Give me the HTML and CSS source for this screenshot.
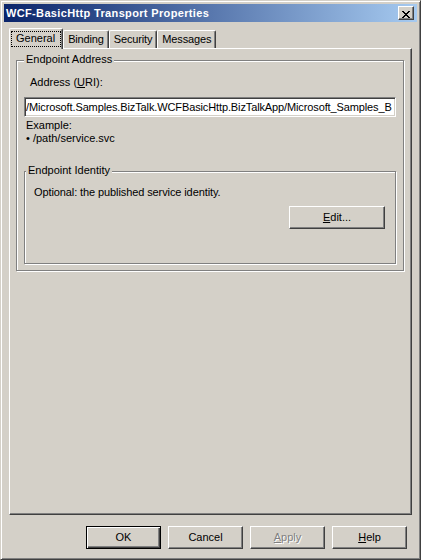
FILE: index.html
```html
<!DOCTYPE html>
<html>
<head>
<meta charset="utf-8">
<title>WCF-BasicHttp Transport Properties</title>
<link rel="stylesheet" href="styles.css">
</head>
<body>
<div class="window">
  <div class="titlebar">
    <span class="title">WCF-BasicHttp Transport Properties</span>
    <button class="close" aria-label="Close">
      <svg width="8" height="7" viewBox="0 0 8 7" shape-rendering="crispEdges"><path fill="#000" d="M0 0h2v1H0zM6 0h2v1H6zM1 1h2v1H1zM5 1h2v1H5zM2 2h4v1H2zM3 3h2v1H3zM2 4h4v1H2zM1 5h2v1H1zM5 5h2v1H5zM0 6h2v1H0zM6 6h2v1H6z"/></svg>
    </button>
  </div>
  <div class="content">
    <div class="tabs">
      <div class="tab active"><span class="focus">General</span></div>
      <div class="tab">Binding</div>
      <div class="tab">Security</div>
      <div class="tab">Messages</div>
    </div>
    <div class="panel">
      <div class="group outer">
        <span class="group-title">Endpoint Address</span>
        <span class="field-label">Address (<u>U</u>RI):</span>
        <div class="textbox">/Microsoft.Samples.BizTalk.WCFBasicHttp.BizTalkApp/Microsoft_Samples_B</div>
        <div class="example">Example:<br>• /path/service.svc</div>
        <div class="group inner">
          <span class="group-title">Endpoint Identity</span>
          <div class="note">Optional: the published service identity.</div>
          <button class="btn btn-edit"><u>E</u>dit...</button>
        </div>
      </div>
    </div>
    <div class="footer">
      <button class="btn default">OK</button>
      <button class="btn">Cancel</button>
      <button class="btn disabled"><u>A</u>pply</button>
      <button class="btn"><u>H</u>elp</button>
    </div>
  </div>
</div>
</body>
</html>
```
FILE: styles.css
```css
* { box-sizing: border-box; }
html, body { margin: 0; padding: 0; background: #d4d0c8; }
body {
  font-family: "Liberation Sans", Arial, sans-serif;
  font-size: 11px;
  line-height: 13px;
  color: #000;
}
.window {
  width: 421px;
  height: 560px;
  display: flex;
  flex-direction: column;
  padding: 3px;
  border: 1px solid;
  border-color: #d4d0c8 #404040 #404040 #d4d0c8;
  box-shadow: inset 1px 1px #fff, inset -1px -1px #808080;
  background: #d4d0c8;
}
.titlebar {
  height: 18px;
  flex: none;
  display: flex;
  align-items: center;
  justify-content: space-between;
  padding: 0 3px 0 2px;
  background: linear-gradient(to right, #0a246a, #a6caf0);
  color: #fff;
  font-weight: bold;
  line-height: 18px;
}
.title { letter-spacing: 0.35px; }
.close {
  width: 16px;
  height: 14px;
  padding: 2px 0 0 3px;
  border: 1px solid;
  border-color: #fff #404040 #404040 #fff;
  box-shadow: inset -1px -1px #808080;
  background: #d4d0c8;
  display: block;
}
.close svg { display: block; }
.content {
  flex: 1;
  display: flex;
  flex-direction: column;
  padding: 6px 5px 7px 5px;
}
.tabs {
  display: flex;
  align-items: flex-end;
  height: 20px;
  flex: none;
}
.tab {
  height: 18px;
  padding: 2px 4px 2px 4px;
  border: 1px solid;
  border-bottom: none;
  border-color: #fff #404040 #404040 #fff;
  box-shadow: inset -1px 0 #808080;
  border-radius: 2px 2px 0 0;
  white-space: nowrap;
  letter-spacing: -0.15px;
}
.tab.active {
  height: 21px;
  margin-bottom: -1px;
  padding: 2px 1px;
  position: relative;
  z-index: 1;
  background: #d4d0c8;
  letter-spacing: 0;
}
.focus {
  display: block;
  border: 1px dotted #000;
  padding: 0 5px 1px 4px;
}
.panel {
  flex: 1;
  border: 1px solid;
  border-color: #fff #404040 #404040 #fff;
  box-shadow: inset -1px -1px #808080;
  padding: 11px 7px 0 6px;
}
.group {
  border: 1px solid #808080;
  box-shadow: inset 1px 1px #fff, 1px 1px #fff;
  display: flex;
  flex-direction: column;
  align-items: flex-start;
}
.group.outer { padding: 0 7px 6px 7px; }
.group-title {
  margin-top: -8px;
  padding: 0 2px;
  background: #d4d0c8;
}
.field-label { margin: 10px 0 0 6px; }
.textbox {
  align-self: stretch;
  margin-top: 8px;
  height: 20px;
  border: 1px solid;
  border-color: #808080 #fff #fff #808080;
  box-shadow: inset 1px 1px #404040, inset -1px -1px #d4d0c8;
  background: #fff;
  padding: 3px 0 2px 1px;
  white-space: nowrap;
  overflow: hidden;
  letter-spacing: -0.12px;
}
.example { margin: 2px 0 0 2px; }
.group.inner {
  align-self: stretch;
  margin-top: 26px;
  padding: 0 10px 34px 9px;
}
.group.inner .group-title { margin-left: -8px; }
.note { margin-top: 9px; letter-spacing: -0.1px; }
.btn {
  width: 75px;
  height: 23px;
  padding: 0;
  border: 1px solid;
  border-color: #fff #404040 #404040 #fff;
  box-shadow: inset -1px -1px #808080;
  background: #d4d0c8;
  font: inherit;
  color: #000;
  line-height: 13px;
}
.btn-edit {
  align-self: flex-end;
  width: 96px;
  margin-top: 7px;
}
.footer {
  flex: none;
  display: flex;
  justify-content: flex-end;
  gap: 7px;
  margin-top: 11px;
  padding-right: 5px;
}
.btn.default {
  border-color: #000;
  box-shadow: inset 1px 1px #fff, inset -1px -1px #404040, inset -2px -2px #808080;
}
.btn.disabled {
  color: #808080;
  text-shadow: 1px 1px #fff;
}
```
